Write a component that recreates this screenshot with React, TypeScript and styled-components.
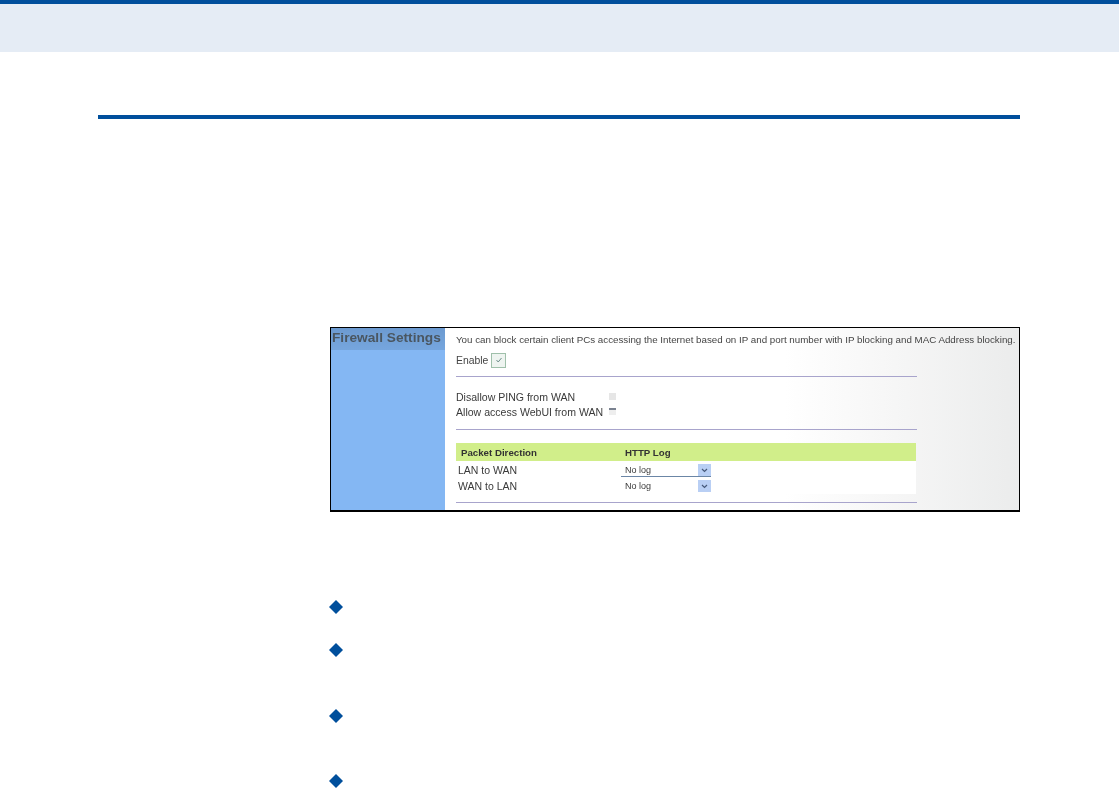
import React from "react";
import styled, { createGlobalStyle } from "styled-components";

const Global = createGlobalStyle`
  html, body { margin: 0; padding: 0; background: #fff; }
  body { font-family: "Liberation Sans", Arial, sans-serif; }
`;

const Page = styled.div`
  width: 1119px;
  height: 790px;
  overflow: hidden;
  background: #fff;
`;
const HeaderBand = styled.header`
  height: 48px;
  background: #e5ecf5;
  border-top: 4px solid #004f9c;
`;
const Main = styled.main`
  padding: 63px 99px 0 98px;
`;
const Rule = styled.div`
  height: 4px;
  background: #004f9c;
`;
const Content = styled.div`
  margin-left: 232px;
  padding-top: 208px;
`;
const Shot = styled.section`
  display: flex;
  height: 182px;
  border: 1px solid #000;
  border-bottom-width: 2px;
  background: linear-gradient(90deg, #fff 0%, #fff 66%, #f6f6f6 82%, #ebecec 100%);
`;
const Side = styled.aside`
  flex: 0 0 114px;
  background: #84b7f3;
`;
const SideTitle = styled.div`
  height: 22px;
  padding-left: 1px;
  background: linear-gradient(#6c9ad0, #76a6de);
  color: #4a5661;
  font-size: 13.7px;
  font-weight: 700;
  line-height: 19px;
  white-space: nowrap;
  filter: blur(0.6px);
`;
const Body = styled.div`
  flex: 1;
  padding: 3px 0 0 11px;
  color: #444;
  min-width: 0;
  filter: blur(0.6px);
`;
const Intro = styled.div`
  height: 17px;
  line-height: 17px;
  white-space: nowrap;
  font-size: 9.78px;
`;
const EnableRow = styled.div`
  display: flex;
  align-items: center;
  gap: 3px;
  height: 20px;
  margin-top: 2px;
  font-size: 10.4px;
`;
const CheckedBox = styled.span`
  display: inline-flex;
  align-items: center;
  justify-content: center;
  width: 13px;
  height: 13px;
  border: 1px solid #9fc0aa;
  background: #eef4f0;
`;
const Divider = styled.div<{ $top: number }>`
  width: 461px;
  height: 1px;
  margin-top: ${(p) => p.$top}px;
  background: #a8a4cc;
`;
const OptionList = styled.div`
  margin-top: 12px;
`;
const OptionRow = styled.div`
  display: flex;
  align-items: center;
  height: 15px;
  font-size: 10.55px;
  white-space: nowrap;
  color: #3a3a3a;
`;
const OptionLabel = styled.span`
  width: 153px;
`;
const SmallBox = styled.span<{ $dark?: boolean }>`
  width: 7px;
  height: 7px;
  background: ${(p) => (p.$dark ? "linear-gradient(#7a8290 0 2px, #eee 2px)" : "#e6e6e6")};
`;
const Table = styled.div`
  width: 460px;
  margin-top: 13px;
  background: #fff;
`;
const TableHead = styled.div`
  display: grid;
  grid-template-columns: 164px 1fr;
  align-items: center;
  height: 18px;
  padding-left: 5px;
  margin-bottom: 1px;
  background: #d1ee8a;
  color: #333;
  font-size: 9.7px;
  font-weight: 700;
`;
const TableRow = styled.div`
  display: grid;
  grid-template-columns: 163px 1fr;
  align-items: center;
  height: 16px;
  padding-left: 2px;
  font-size: 10.5px;
  color: #3a3a3a;
`;
const SelectBox = styled.div<{ $line?: boolean }>`
  display: flex;
  align-items: center;
  justify-content: space-between;
  width: 90px;
  height: 13px;
  font-size: 9px;
  padding-left: 4px;
  box-sizing: border-box;
  box-shadow: ${(p) => (p.$line ? "inset 0 -1px 0 #6b86a6" : "none")};
`;
const SelectArrow = styled.span`
  display: inline-flex;
  align-items: center;
  justify-content: center;
  width: 13px;
  height: 12px;
  background: #b9cff4;
`;
const BulletList = styled.ul`
  list-style: none;
  margin: 0 0 0 -1px;
  padding: 88px 0 0 0;
`;
const Bullet = styled.li<{ $h: number }>`
  height: ${(p) => p.$h}px;
`;

const Diamond = () => (
  <svg width="14" height="14" viewBox="0 0 14 14" aria-hidden="true" style={{ display: "block" }}>
    <path d="M7 0 L14 7 L7 14 L0 7 Z" fill="#004f9c" />
  </svg>
);
const Arrow = () => (
  <svg width="7" height="5" viewBox="0 0 7 5" aria-hidden="true">
    <path d="M1 1 L3.5 3.5 L6 1" fill="none" stroke="#46597a" strokeWidth="1.2" />
  </svg>
);

export default function App() {
  return (
    <Page>
      <Global />
      <HeaderBand />
      <Main>
        <Rule />
        <Content>
          <Shot>
            <Side>
              <SideTitle>Firewall Settings</SideTitle>
            </Side>
            <Body>
              <Intro>
                You can block certain client PCs accessing the Internet based on IP and port number with IP blocking and MAC Address blocking.
              </Intro>
              <EnableRow>
                Enable
                <CheckedBox>
                  <svg width="8" height="8" viewBox="0 0 8 8" aria-hidden="true">
                    <path d="M1.5 4 L3.2 6 L6.5 2" fill="none" stroke="#6d8d8a" strokeWidth="1" />
                  </svg>
                </CheckedBox>
              </EnableRow>
              <Divider $top={6} />
              <OptionList>
                <OptionRow>
                  <OptionLabel>Disallow PING from WAN</OptionLabel>
                  <SmallBox />
                </OptionRow>
                <OptionRow>
                  <OptionLabel>Allow access WebUI from WAN</OptionLabel>
                  <SmallBox $dark />
                </OptionRow>
              </OptionList>
              <Divider $top={10} />
              <Table>
                <TableHead>
                  <span>Packet Direction</span>
                  <span>HTTP Log</span>
                </TableHead>
                <TableRow>
                  <span>LAN to WAN</span>
                  <SelectBox $line>
                    No log
                    <SelectArrow><Arrow /></SelectArrow>
                  </SelectBox>
                </TableRow>
                <TableRow>
                  <span>WAN to LAN</span>
                  <SelectBox>
                    No log
                    <SelectArrow><Arrow /></SelectArrow>
                  </SelectBox>
                </TableRow>
              </Table>
              <Divider $top={8} />
            </Body>
          </Shot>
          <BulletList>
            <Bullet $h={43}><Diamond /></Bullet>
            <Bullet $h={66}><Diamond /></Bullet>
            <Bullet $h={65}><Diamond /></Bullet>
            <Bullet $h={20}><Diamond /></Bullet>
          </BulletList>
        </Content>
      </Main>
    </Page>
  );
}
